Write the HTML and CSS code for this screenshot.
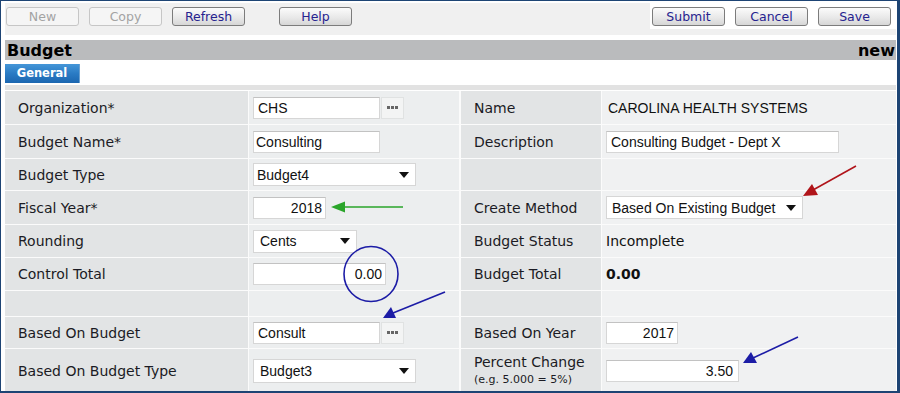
FILE: index.html
```html
<!DOCTYPE html>
<html lang="en">
<head>
    <meta charset="UTF-8">
    <title>Budget</title>
    <link rel="stylesheet" href="styles.css">
</head>
<body>
    <div class="frame">
        <div class="toolbar">
            <div class="tb-left">
                <button class="btn" disabled>New</button>
                <button class="btn" disabled>Copy</button>
                <button class="btn">Refresh</button>
                <button class="btn help">Help</button>
            </div>
            <div class="tb-right">
                <button class="btn">Submit</button>
                <button class="btn">Cancel</button>
                <button class="btn">Save</button>
            </div>
        </div>

        <div class="titlebar">
            <span>Budget</span>
            <span>new</span>
        </div>

        <div class="tabs">
            <div class="tab">General</div>
        </div>
        <div class="band"></div>

        <div class="form">
            <!-- row 1 -->
            <div class="lbl">Organization*</div>
            <div class="val">
                <input class="field w127" value="CHS">
                <button class="lookup"><svg width="12" height="4" viewBox="0 0 12 4"><rect x="0" y="0" width="3" height="3"/><rect x="4" y="0" width="3" height="3"/><rect x="8" y="0" width="3" height="3"/></svg></button>
            </div>
            <div class="lbl r">Name</div>
            <div class="val r"><span class="plain">CAROLINA HEALTH SYSTEMS</span></div>

            <!-- row 2 -->
            <div class="lbl">Budget Name*</div>
            <div class="val"><input class="field w127 pl2" value="Consulting"></div>
            <div class="lbl r">Description</div>
            <div class="val r"><input class="field w233" value="Consulting Budget - Dept X"></div>

            <!-- row 3 -->
            <div class="lbl">Budget Type</div>
            <div class="val">
                <div class="select w163 pl3"><span>Budget4</span><svg width="10" height="6" viewBox="0 0 10 6"><path d="M0 0H10L5 6Z"/></svg></div>
            </div>
            <div class="lbl r"></div>
            <div class="val r"></div>

            <!-- row 4 -->
            <div class="lbl">Fiscal Year*</div>
            <div class="val"><input class="field w73 num" value="2018"></div>
            <div class="lbl r">Create Method</div>
            <div class="val r">
                <div class="select w197 pl6"><span>Based On Existing Budget</span><svg width="10" height="6" viewBox="0 0 10 6"><path d="M0 0H10L5 6Z"/></svg></div>
            </div>

            <!-- row 5 -->
            <div class="lbl">Rounding</div>
            <div class="val">
                <div class="select w104 pl7"><span>Cents</span><svg width="10" height="6" viewBox="0 0 10 6"><path d="M0 0H10L5 6Z"/></svg></div>
            </div>
            <div class="lbl r">Budget Status</div>
            <div class="val r"><span class="plain v">Incomplete</span></div>

            <!-- row 6 -->
            <div class="lbl">Control Total</div>
            <div class="val"><input class="field w133 num" value="0.00"></div>
            <div class="lbl r">Budget Total</div>
            <div class="val r"><span class="plain v bold">0.00</span></div>

            <!-- row 7 -->
            <div class="lbl"></div>
            <div class="val"></div>
            <div class="lbl r"></div>
            <div class="val r"></div>

            <!-- row 8 -->
            <div class="lbl">Based On Budget</div>
            <div class="val">
                <input class="field w127" value="Consult">
                <button class="lookup"><svg width="12" height="4" viewBox="0 0 12 4"><rect x="0" y="0" width="3" height="3"/><rect x="4" y="0" width="3" height="3"/><rect x="8" y="0" width="3" height="3"/></svg></button>
            </div>
            <div class="lbl r">Based On Year</div>
            <div class="val r"><input class="field w72 num" value="2017"></div>

            <!-- row 9 -->
            <div class="lbl">Based On Budget Type</div>
            <div class="val">
                <div class="select w163 pl7 tall"><span>Budget3</span><svg width="10" height="6" viewBox="0 0 10 6"><path d="M0 0H10L5 6Z"/></svg></div>
            </div>
            <div class="lbl r stack">
                <span>Percent Change</span>
                <span class="hint">(e.g. 5.000 = 5%)</span>
            </div>
            <div class="val r"><input class="field w133 num pc" value="3.50"></div>
        </div>

        <!-- screenshot annotations -->
        <svg class="notes" width="900" height="393" viewBox="0 0 900 393">
            <line x1="403" y1="207" x2="340" y2="207" stroke="#2aa52a" stroke-width="1.6"/>
            <path d="M331 207L345 201.5L345 212.5Z" fill="#2aa52a"/>

            <line x1="856" y1="166" x2="813" y2="190" stroke="#b0141a" stroke-width="1.6"/>
            <path d="M803 196L812 184L818 195Z" fill="#b0141a"/>

            <ellipse cx="371" cy="274" rx="27" ry="27.5" fill="none" stroke="#1c1ca6" stroke-width="1.6"/>

            <line x1="445" y1="292" x2="393" y2="313" stroke="#1c1ca6" stroke-width="1.6"/>
            <path d="M383 318L391 307L396 318Z" fill="#1c1ca6"/>

            <line x1="798" y1="337" x2="753" y2="358" stroke="#1c1ca6" stroke-width="1.6"/>
            <path d="M743 363L751 352L757 363Z" fill="#1c1ca6"/>
        </svg>
    </div>
</body>
</html>
```

FILE: styles.css
```css
body {
    margin: 0;
    background: #fff;
    font-family: "DejaVu Sans", Verdana, sans-serif;
    overflow: hidden;
}
.frame {
    position: relative;
    width: 900px;
    height: 393px;
    box-sizing: border-box;
    border: 2px solid #1d4474;
    border-left-width: 1px;
    border-top-width: 1px;
    border-right-width: 3px;
    padding: 2px 1px 0 4px;
    overflow: hidden;
}
.toolbar {
    display: flex;
    align-items: flex-start;
    height: 32px;
    background-color: #f0f0f0;
}
.tb-left {
    display: flex;
    gap: 10px;
    padding: 4px 0 0 1px;
}
.tb-right {
    display: flex;
    gap: 10px;
    margin-left: auto;
    background-color: #fff;
    padding: 4px 5px 3px 2px;
}
.btn {
    width: 73px;
    height: 19px;
    padding: 0;
    font-family: "DejaVu Sans", Verdana, sans-serif;
    font-size: 12.5px;
    color: #26238f;
    background: linear-gradient(#fbfbfb, #e9e9e9 55%, #d6d6d6);
    border: 1px solid #7c7c7c;
    border-radius: 3px;
    cursor: pointer;
}
.btn:disabled {
    color: #a3a3a3;
    border-color: #c6c6c6;
    background: #f5f5f5;
    cursor: default;
}
.btn.help {
    margin-left: 24px;
}
.titlebar {
    display: flex;
    justify-content: space-between;
    margin-top: 5px;
    height: 20px;
    line-height: 21px;
    padding: 0 1px 0 2px;
    background-color: #babbbd;
    font-size: 16px;
    font-weight: bold;
    color: #000;
}
.tabs {
    margin-top: 4px;
    height: 19px;
}
.tab {
    width: 75px;
    height: 19px;
    line-height: 19px;
    text-align: center;
    color: #fff;
    font-size: 11.5px;
    font-weight: bold;
    background: linear-gradient(#4596d8, #2a7bc4 50%, #1b66b0);
    border-right: 1px solid #6a9fcf;
    box-sizing: border-box;
}
.band {
    margin-top: 2px;
    height: 5px;
    background-color: #e2e2e2;
}
.form {
    display: grid;
    grid-template-columns: 243px 210px 141px 1fr;
    grid-template-rows: 33px 33px 31px 33px 32px 32px 25px 31px 43px;
    gap: 1px;
    margin-top: 1px;
    background-color: #fbfbfb;
}
.lbl {
    display: flex;
    align-items: center;
    padding-left: 13px;
    font-size: 14px;
    color: #1b1b24;
    background-color: #e2e4e5;
}
.lbl.r {
    margin-left: 1px;
}
.val {
    display: flex;
    align-items: center;
    padding-left: 4px;
    background-color: #eceeef;
}
.val.r {
    background-color: #f0f1f2;
}
.stack {
    flex-direction: column;
    align-items: flex-start;
    justify-content: center;
    line-height: 18px;
}
.hint {
    font-size: 11px;
}
.plain {
    font-family: "Liberation Sans", Arial, sans-serif;
    font-size: 14px;
    color: #111;
    padding-left: 2px;
}
.plain.v {
    font-family: "DejaVu Sans", Verdana, sans-serif;
    padding-left: 0;
}
.plain.bold {
    font-weight: bold;
}
.field {
    height: 22px;
    box-sizing: border-box;
    padding: 0 4px;
    margin: 0;
    font-family: "Liberation Sans", Arial, sans-serif;
    font-size: 14px;
    color: #111;
    background: #fff;
    border: 1px solid #d6d6d6;
    border-top-color: #c2c2c2;
    outline: none;
}
.field.num {
    text-align: right;
    padding-right: 3px;
}
.field.pl2 {
    padding-left: 2px;
}
.field.pc {
    padding-right: 5px;
}
.w72 { width: 72px; }
.w73 { width: 73px; }
.w104 { width: 104px; }
.w127 { width: 127px; }
.w133 { width: 133px; }
.w163 { width: 163px; }
.w197 { width: 197px; }
.w233 { width: 233px; }
.lookup {
    width: 23px;
    height: 22px;
    margin-left: 1px;
    padding: 0;
    display: flex;
    align-items: center;
    justify-content: center;
    background-color: #f3f4f4;
    border: 1px solid #e0e2e2;
}
.lookup svg {
    fill: #666;
}
.select {
    display: flex;
    align-items: center;
    justify-content: space-between;
    height: 23px;
    box-sizing: border-box;
    padding-right: 6px;
    font-family: "Liberation Sans", Arial, sans-serif;
    font-size: 14px;
    color: #111;
    background: #fff;
    border: 1px solid #d6d6d6;
}
.select.tall {
    height: 24px;
}
.select svg {
    fill: #111;
}
.pl3 { padding-left: 3px; }
.pl6 { padding-left: 5px; }
.pl7 { padding-left: 6px; }
.notes {
    position: absolute;
    left: -1px;
    top: -1px;
    pointer-events: none;
}
```
